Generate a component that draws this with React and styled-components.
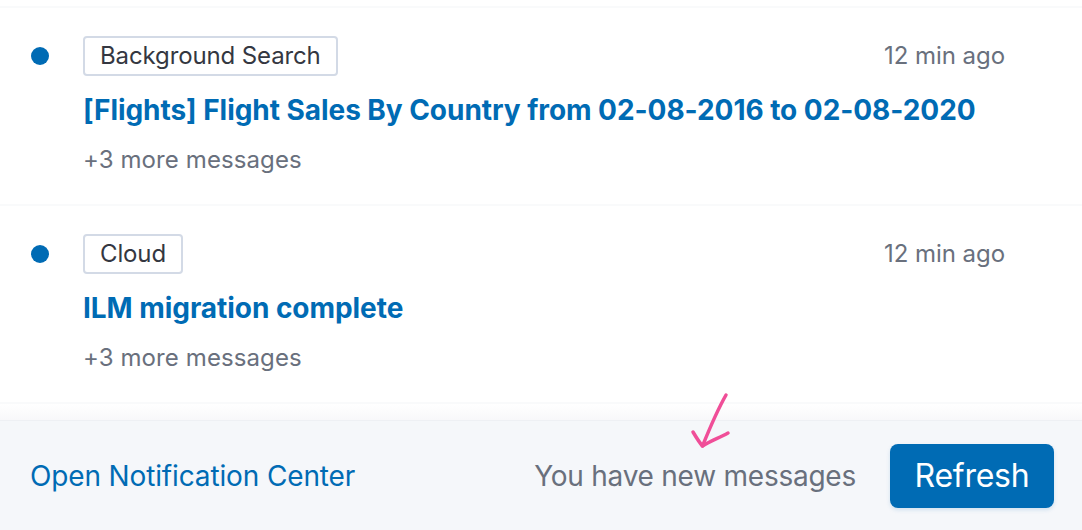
import React from 'react';
import styled, { createGlobalStyle } from 'styled-components';

const Global = createGlobalStyle`
  html, body { margin: 0; padding: 0; background: #fff; }
  body { font-family: Inter, "Liberation Sans", sans-serif; overflow: hidden; }
`;
const Page = styled.div`
  width: 1082px; height: 530px; display: flex; flex-direction: column; overflow: hidden; background: #fff;
`;
const List = styled.div`
  flex: 1; padding-top: 6px;
`;
const Row = styled.div`
  height: 198px; box-sizing: border-box; border-top: 2px solid #f9fafb;
  display: grid; grid-template-columns: 83px 1fr; padding-right: 77px;
`;
const Fade = styled.div`
  height: 18px; border-top: 2px solid #f9fafb; box-sizing: border-box;
  background: linear-gradient(to bottom, #fff, #f8f8fa);
`;
const DotCell = styled.div`
  padding: 39px 0 0 31px;
`;
const Dot = styled.div`
  width: 18px; height: 18px; border-radius: 50%; background: #006bb4;
`;
const Body = styled.div`
  padding-top: 28px; display: flex; flex-direction: column;
`;
const Meta = styled.div`
  display: flex; justify-content: space-between; align-items: center; height: 40px;
`;
const Badge = styled.span`
  box-sizing: border-box; height: 40px; padding: 0 15px; border: 2px solid #d3dae6; border-radius: 4px;
  font-size: 24px; line-height: 36px; color: #343741; background: #fff; white-space: nowrap; letter-spacing: -0.12px;
`;
const Time = styled.span`
  font-size: 24px; line-height: 36px; color: #69707d; letter-spacing: -0.06px;
`;
const Title = styled.div`
  margin-top: 13px; font-size: 28px; line-height: 42px; font-weight: 700; color: #006bb4; white-space: nowrap; letter-spacing: -0.05px;
`;
const More = styled.div`
  margin-top: 11px; font-size: 24px; line-height: 36px; color: #69707d; letter-spacing: 0.1px;
`;
const Footer = styled.div`
  height: 110px; flex: none; box-sizing: border-box; background: #f5f7fa; border-top: 1px solid #eef0f4;
  display: flex; align-items: center; padding: 0 28px 0 30px; position: relative;
`;
const FooterLink = styled.a`
  font-size: 28px; color: #006bb4; margin-right: auto; text-decoration: none; letter-spacing: -0.14px;
`;
const Status = styled.span`
  font-size: 28px; color: #69707d; margin-right: 34px; letter-spacing: -0.24px;
`;
const Button = styled.button`
  width: 164px; height: 64px; border: 0; border-radius: 8px; background: #006bb4; color: #fff;
  font-family: inherit; font-size: 32px; padding: 0; letter-spacing: -0.25px;
  box-shadow: 0 2px 4px rgba(0, 107, 180, 0.15);
`;
const Arrow = styled.svg`
  position: absolute; left: 688px; top: -28px; width: 46px; height: 62px; overflow: visible;
`;

const items = [
  { tag: 'Background Search', title: '[Flights] Flight Sales By Country from 02-08-2016 to 02-08-2020' },
  { tag: 'Cloud', title: 'ILM migration complete' },
];

export default function App() {
  return (
    <Page>
      <Global />
      <List>
        {items.map((it) => (
          <Row key={it.tag}>
            <DotCell><Dot /></DotCell>
            <Body>
              <Meta>
                <Badge>{it.tag}</Badge>
                <Time>12 min ago</Time>
              </Meta>
              <Title>{it.title}</Title>
              <More>+3 more messages</More>
            </Body>
          </Row>
        ))}
        <Fade />
      </List>
      <Footer>
        <FooterLink>Open Notification Center</FooterLink>
        <Status>You have new messages</Status>
        <Button>Refresh</Button>
        <Arrow viewBox="0 0 46 62" fill="none" stroke="#f04e98" strokeWidth="3.5" strokeLinecap="round" strokeLinejoin="round">
          <path d="M38 2C30 16 23 32 14.5 53" />
          <path d="M5 39C8 44 11 49 14.5 53C22 48 31 45 40 40" />
        </Arrow>
      </Footer>
    </Page>
  );
}
